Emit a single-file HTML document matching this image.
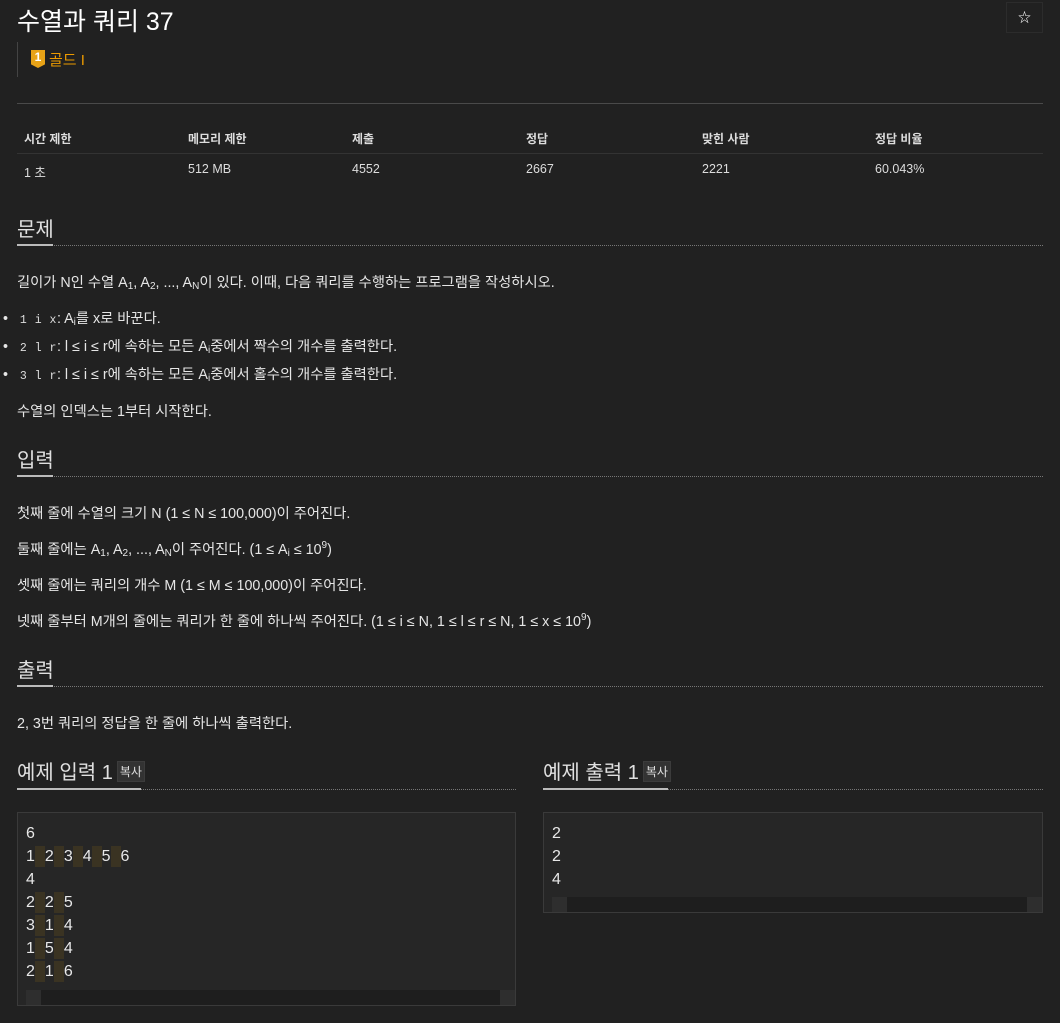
<!DOCTYPE html>
<html><head><meta charset="utf-8"><style>
*{margin:0;padding:0;box-sizing:border-box}
body{width:1060px;height:1023px;background:#212121;color:#e6e6e6;font-family:"Liberation Sans","Noto Sans CJK KR",sans-serif;font-size:14px;position:relative;overflow:hidden}
.a{position:absolute;white-space:nowrap}
h1{position:absolute;left:17px;top:2px;font-size:25px;font-weight:normal;color:#fff}
.star{position:absolute;left:1006px;top:2px;width:37px;height:31px;border:1px solid #2c2c2c;color:#fff;text-align:center;line-height:29px;font-size:13px}
.tier{position:absolute;left:17px;top:42px;height:35px;border-left:1px solid #444}
.hr{position:absolute;left:17px;width:1026px;height:1px;background:#4a4a4a}
.th{font-weight:bold;font-size:12px;color:#ddd}
.td{font-size:12.5px;color:#ddd}
.h2{position:absolute;font-size:20px;color:#e0e0e0}
.dl{position:absolute;height:0;border-top:1px dotted #777}
.ul{position:absolute;height:2px;background:#bbb}
p.a{font-size:14.3px;line-height:20px}
code{font-family:"Liberation Mono",monospace;font-size:11.5px;color:#ddd;letter-spacing:0.5px}
sub,sup{font-size:10px;line-height:0}
sub{vertical-align:-2px}
sup{vertical-align:6px}
.pre{position:absolute;background:#262626;border:1px solid #3a3a3a;font-family:"Liberation Sans","DejaVu Sans",sans-serif;font-size:16px;color:#e8e8e8}
.pre div{position:absolute;left:8px;line-height:23px}
.sp{display:inline-block;width:10px;height:21px;background:#3a3322;vertical-align:middle}
.sb{position:absolute;left:0;right:0;bottom:0;height:15px;background:#1e1e1e}
.sb i{position:absolute;top:0;width:15px;height:15px;background:#2e2e2e}
.copy{display:inline-block;background:#333;border:1px solid #3c3c3c;font-size:12px;padding:1px 2px;vertical-align:3px;margin-left:4px}
</style></head><body>
<h1>수열과 쿼리 37</h1>
<div class="star">☆</div>
<div class="tier"></div>
<div class="a" style="left:31px;top:50px;width:14px;height:18px;background:#e8a317;color:#fff;font-weight:bold;font-size:12px;text-align:center;line-height:15px;clip-path:polygon(0 0,100% 0,100% 80%,50% 100%,0 80%)">1</div>
<div class="a" style="left:49px;top:49px;font-size:15px;color:#ec9a00">골드 I</div>
<div class="hr" style="top:103px"></div>
<div class="a th" style="left:24px;top:130px">시간 제한</div>
<div class="a th" style="left:188px;top:130px">메모리 제한</div>
<div class="a th" style="left:352px;top:130px">제출</div>
<div class="a th" style="left:526px;top:130px">정답</div>
<div class="a th" style="left:702px;top:130px">맞힌 사람</div>
<div class="a th" style="left:875px;top:130px">정답 비율</div>
<div class="hr" style="top:153px;background:#333"></div>
<div class="a td" style="left:24px;top:162px">1 초</div>
<div class="a td" style="left:188px;top:162px">512 MB</div>
<div class="a td" style="left:352px;top:162px">4552</div>
<div class="a td" style="left:526px;top:162px">2667</div>
<div class="a td" style="left:702px;top:162px">2221</div>
<div class="a td" style="left:875px;top:162px">60.043%</div>

<div class="h2 a" style="left:17px;top:213px">문제</div>
<div class="dl" style="left:17px;width:1026px;top:245px"></div><div class="ul" style="left:17px;width:36px;top:244px"></div>
<p class="a" style="left:17px;top:273px">길이가 N인 수열 A<sub>1</sub>, A<sub>2</sub>, ..., A<sub>N</sub>이 있다. 이때, 다음 쿼리를 수행하는 프로그램을 작성하시오.</p>
<p class="a" style="left:3px;top:309px">•&nbsp;&nbsp;&nbsp;<code>1 i x</code>: A<sub>i</sub>를 x로 바꾼다.</p>
<p class="a" style="left:3px;top:337px">•&nbsp;&nbsp;&nbsp;<code>2 l r</code>: l ≤ i ≤ r에 속하는 모든 A<sub>i</sub>중에서 짝수의 개수를 출력한다.</p>
<p class="a" style="left:3px;top:365px">•&nbsp;&nbsp;&nbsp;<code>3 l r</code>: l ≤ i ≤ r에 속하는 모든 A<sub>i</sub>중에서 홀수의 개수를 출력한다.</p>
<p class="a" style="left:17px;top:402px">수열의 인덱스는 1부터 시작한다.</p>

<div class="h2 a" style="left:17px;top:444px">입력</div>
<div class="dl" style="left:17px;width:1026px;top:476px"></div><div class="ul" style="left:17px;width:36px;top:475px"></div>
<p class="a" style="left:17px;top:504px">첫째 줄에 수열의 크기 N (1 ≤ N ≤ 100,000)이 주어진다.</p>
<p class="a" style="left:17px;top:540px">둘째 줄에는 A<sub>1</sub>, A<sub>2</sub>, ..., A<sub>N</sub>이 주어진다. (1 ≤ A<sub>i</sub> ≤ 10<sup>9</sup>)</p>
<p class="a" style="left:17px;top:576px">셋째 줄에는 쿼리의 개수 M (1 ≤ M ≤ 100,000)이 주어진다.</p>
<p class="a" style="left:17px;top:612px">넷째 줄부터 M개의 줄에는 쿼리가 한 줄에 하나씩 주어진다. (1 ≤ i ≤ N, 1 ≤ l ≤ r ≤ N, 1 ≤ x ≤ 10<sup>9</sup>)</p>

<div class="h2 a" style="left:17px;top:654px">출력</div>
<div class="dl" style="left:17px;width:1026px;top:686px"></div><div class="ul" style="left:17px;width:36px;top:685px"></div>
<p class="a" style="left:17px;top:714px">2, 3번 쿼리의 정답을 한 줄에 하나씩 출력한다.</p>

<div class="h2 a" style="left:17px;top:756px">예제 입력 1<span class="copy">복사</span></div>
<div class="dl" style="left:17px;width:499px;top:789px"></div><div class="ul" style="left:17px;width:124px;top:788px"></div>
<div class="h2 a" style="left:543px;top:756px">예제 출력 1<span class="copy">복사</span></div>
<div class="dl" style="left:543px;width:500px;top:789px"></div><div class="ul" style="left:543px;width:125px;top:788px"></div>

<div class="pre" style="left:17px;top:812px;width:499px;height:194px">
<div style="top:9px">6<br>1<span class="sp"></span>2<span class="sp"></span>3<span class="sp"></span>4<span class="sp"></span>5<span class="sp"></span>6<br>4<br>2<span class="sp"></span>2<span class="sp"></span>5<br>3<span class="sp"></span>1<span class="sp"></span>4<br>1<span class="sp"></span>5<span class="sp"></span>4<br>2<span class="sp"></span>1<span class="sp"></span>6</div>
<div class="sb"><i style="left:0"></i><i style="right:0"></i></div>
</div>
<div class="pre" style="left:543px;top:812px;width:500px;height:101px">
<div style="top:9px">2<br>2<br>4</div>
<div class="sb"><i style="left:0"></i><i style="right:0"></i></div>
</div>
</body></html>
